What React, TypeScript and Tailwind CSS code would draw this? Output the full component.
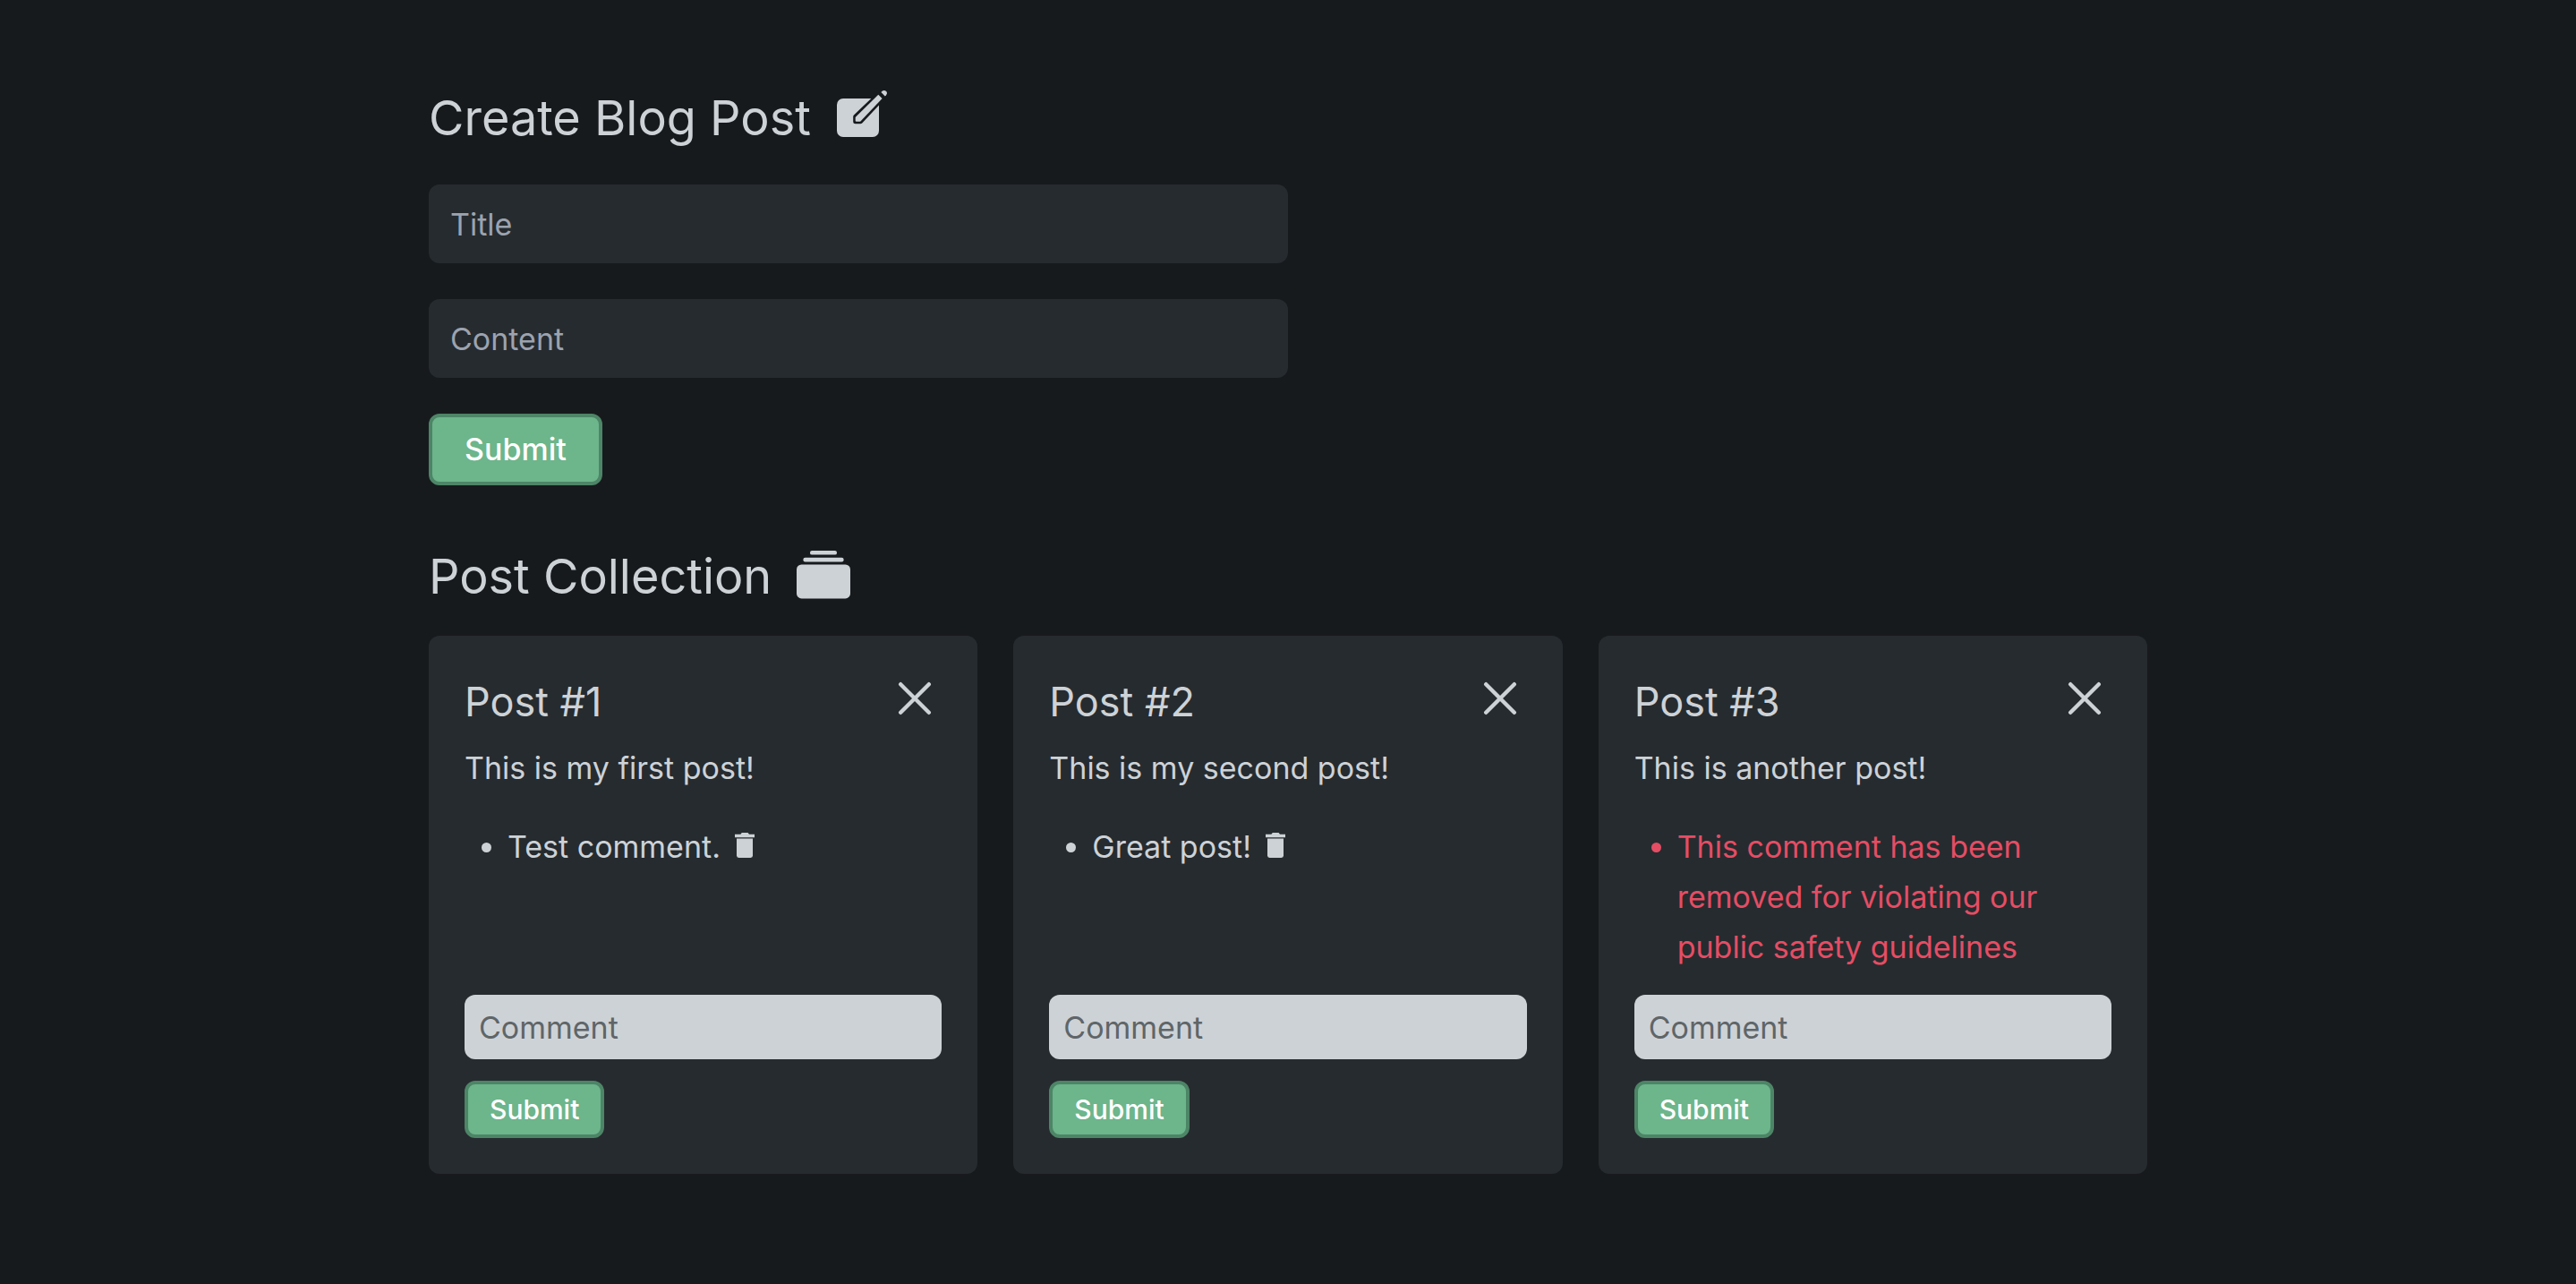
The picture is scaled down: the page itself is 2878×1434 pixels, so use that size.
type Comment = { text: string; removed?: boolean };
type Post = { title: string; content: string; comments: Comment[] };

const posts: Post[] = [
  { title: "Post #1", content: "This is my first post!", comments: [{ text: "Test comment." }] },
  { title: "Post #2", content: "This is my second post!", comments: [{ text: "Great post!" }] },
  {
    title: "Post #3",
    content: "This is another post!",
    comments: [
      { text: "This comment has been removed for violating our public safety guidelines", removed: true },
    ],
  },
];

function ComposeIcon() {
  return (
    <svg viewBox="0 0 64 64" className="size-16" fill="currentColor" aria-hidden="true">
      <rect x="1" y="10" width="47" height="43" rx="7" />
      <path
        d="M47.3 5.8 51.6 10.1 27.4 35.8H21.7V30.4Z"
        stroke="#171a1d"
        strokeWidth="5"
        strokeLinejoin="round"
      />
      <path d="M47.3 5.8 51.6 10.1 27.4 35.4Q27 35.8 26.4 35.8H22.7Q21.7 35.8 21.7 34.8V31.4Q21.7 30.8 22.1 30.4Z" />
      <path d="M50.4 3 51.6 1.8Q53.7 0 55.9 1.8 58 4 56 6.2L54.8 7.4Z" />
    </svg>
  );
}

function AlbumsIcon() {
  return (
    <svg viewBox="0 0 64 64" className="size-16" fill="currentColor" aria-hidden="true">
      <rect x="15" y="3" width="30" height="4.6" rx="2.2" />
      <rect x="7.4" y="10.8" width="45.2" height="4.6" rx="2.2" />
      <rect x="0" y="18.4" width="60" height="38" rx="5.5" />
    </svg>
  );
}

function CloseIcon() {
  return (
    <svg viewBox="0 0 60 60" className="size-15" fill="none" stroke="currentColor" strokeWidth="4.4" strokeLinecap="round" aria-hidden="true">
      <path d="M14.2 14.2 45.8 45.8M45.8 14.2 14.2 45.8" />
    </svg>
  );
}

function TrashIcon() {
  return (
    <svg viewBox="0 0 22 28" className="inline h-7 w-[22px] align-baseline" fill="currentColor" aria-hidden="true">
      <path d="M7.8 0H14.6L16 1.8H22V5.2H0V1.8H6.4Z" />
      <path d="M2 6.6H20V25.6Q20 28 17.6 28H4.4Q2 28 2 25.6Z" />
    </svg>
  );
}

function Field({ label }: { label: string }) {
  return (
    <input
      type="text"
      aria-label={label}
      placeholder={label}
      className="h-22 w-full rounded-xl bg-[#262b2f] px-6 text-[34px] outline-none placeholder:text-[#9ca3af]"
    />
  );
}

function PostCard({ post }: { post: Post }) {
  return (
    <article className="flex flex-col rounded-xl bg-[#262b2f] p-10">
      <header className="flex items-start justify-between">
        <h2 className="text-[45px] leading-[68px]">{post.title}</h2>
        <button type="button" aria-label={`Delete ${post.title}`}>
          <CloseIcon />
        </button>
      </header>
      <p className="mt-3 text-[34px] leading-14">{post.content}</p>
      <ul className="mt-8 mb-[25px] list-disc pl-12 text-[34px] leading-14">
        {post.comments.map((c) => (
          <li key={c.text} className={c.removed ? "text-[#e54d64]" : ""}>
            {c.text}
            {!c.removed && (
              <button type="button" aria-label="Delete comment" className="ml-4">
                <TrashIcon />
              </button>
            )}
          </li>
        ))}
      </ul>
      <form className="mt-auto flex flex-col items-start gap-6" onSubmit={(e) => e.preventDefault()}>
        <input
          type="text"
          aria-label={`Comment on ${post.title}`}
          placeholder="Comment"
          className="h-18 w-full rounded-xl bg-[#cdd2d7] px-4 text-[34px] text-[#171a1d] outline-none placeholder:text-[#5f6568]"
        />
        <button
          type="submit"
          className="h-16 rounded-xl border-4 border-[#4d8567] bg-[#6db58b] px-6 text-[30px] leading-none font-medium text-white"
        >
          Submit
        </button>
      </form>
    </article>
  );
}

export default function App() {
  return (
    <div className="min-h-screen bg-[#171a1d] pt-[94px] pb-24 font-['Inter','Liberation_Sans',sans-serif] text-[#cdd2d7]">
      <main className="mx-auto w-[1920px] max-w-full">
        <h1 className="flex items-center gap-7 text-[54px] leading-[76px]">
          Create Blog Post
          <ComposeIcon />
        </h1>
        <form className="mt-9 flex w-1/2 flex-col items-start gap-10" onSubmit={(e) => e.preventDefault()}>
          <Field label="Title" />
          <Field label="Content" />
          <button
            type="submit"
            className="h-20 rounded-xl border-4 border-[#4d8567] bg-[#6db58b] px-9 text-[34px] leading-none font-medium text-white"
          >
            Submit
          </button>
        </form>
        <h1 className="mt-16 flex items-center gap-7 text-[54px] leading-[76px]">
          Post Collection
          <AlbumsIcon />
        </h1>
        <div className="mt-7 grid grid-cols-3 gap-10">
          {posts.map((p) => (
            <PostCard key={p.title} post={p} />
          ))}
        </div>
      </main>
    </div>
  );
}
